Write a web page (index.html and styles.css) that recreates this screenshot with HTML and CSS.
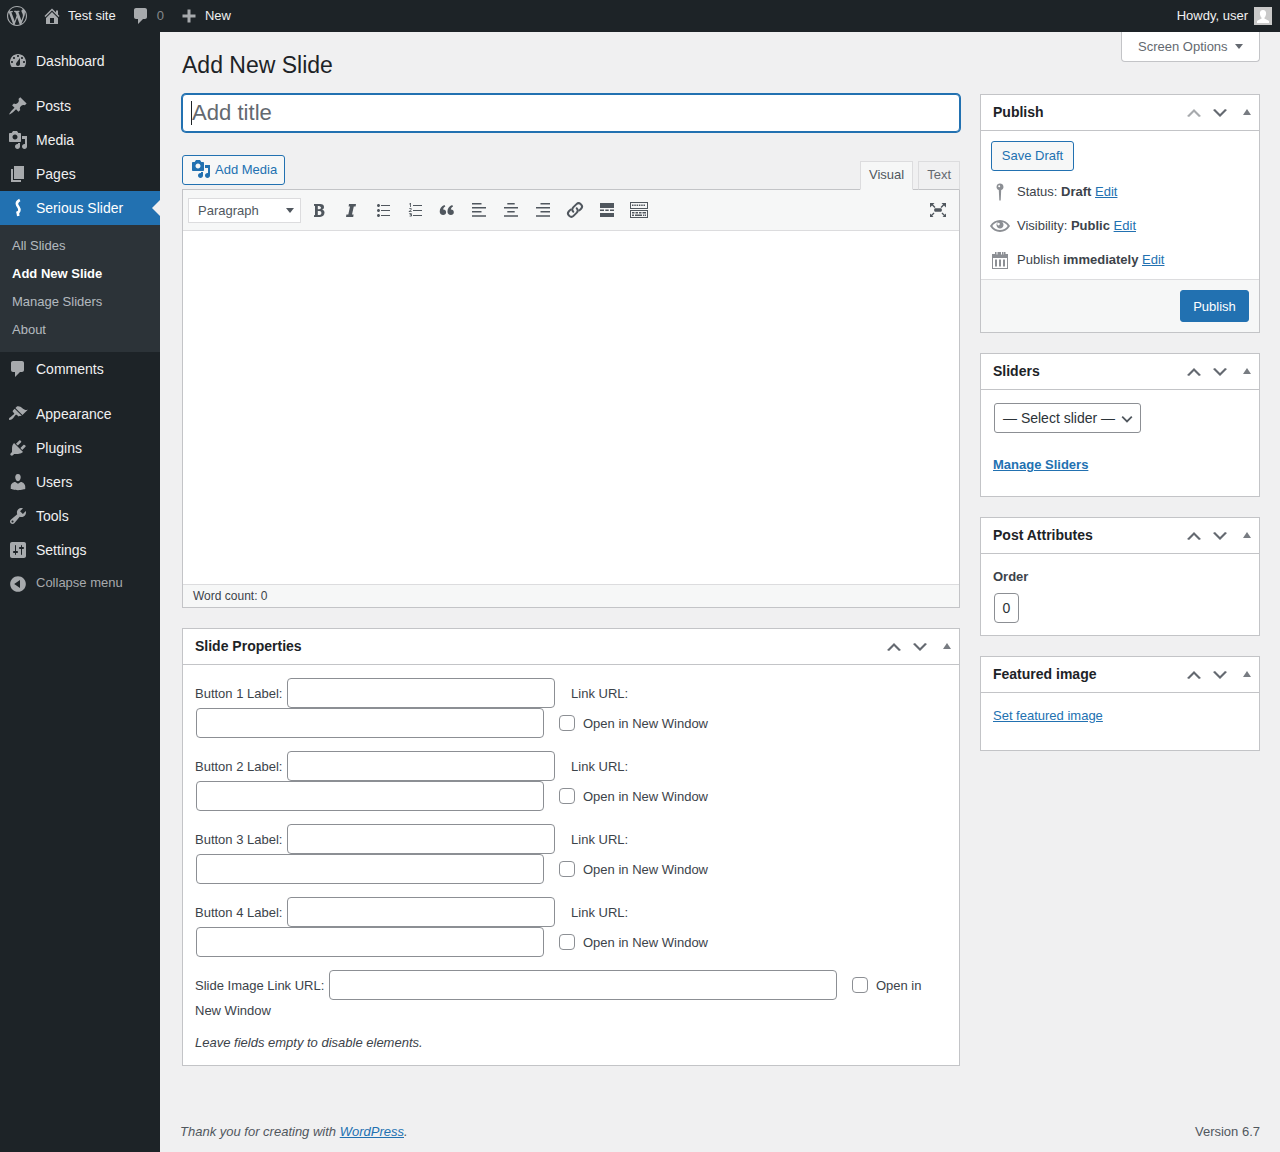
FILE: index.html
```html
<!DOCTYPE html>
<html lang="en">
<head>
<meta charset="utf-8">
<title>Add New Slide</title>
<link rel="stylesheet" href="styles.css">
</head>
<body>
<header class="adminbar">
  <svg class="bar-logo" viewBox="0 0 20 20"><path d="M20 10c0-5.51-4.49-10-10-10C4.48 0 0 4.49 0 10c0 5.52 4.48 10 10 10 5.51 0 10-4.48 10-10zM7.78 15.37L4.37 6.22c.55-.02 1.17-.08 1.17-.08.5-.06.44-1.13-.06-1.11 0 0-1.45.11-2.37.11-.18 0-.37 0-.58-.01C4.12 2.69 6.87 1.11 10 1.11c2.33 0 4.45.87 6.05 2.34-.68-.11-1.65.39-1.65 1.58 0 .74.45 1.36.9 2.1.35.61.55 1.36.55 2.46 0 1.49-1.4 5-1.4 5l-3.03-8.37c.54-.02.82-.17.82-.17.5-.05.44-1.25-.06-1.22 0 0-1.44.12-2.38.12-.87 0-2.33-.12-2.33-.12-.5-.03-.56 1.2-.06 1.22l.92.08 1.26 3.41zM17.41 10c.24-.64.74-1.87.43-4.25.7 1.29 1.05 2.71 1.05 4.25 0 3.29-1.73 6.24-4.4 7.78.97-2.59 1.94-5.2 2.92-7.78zM6.1 18.09C3.12 16.65 1.11 13.53 1.11 10c0-1.3.23-2.48.72-3.59C3.25 10.3 4.67 14.2 6.1 18.09zm4.03-6.63l2.58 6.98c-.86.29-1.76.45-2.71.45-.79 0-1.57-.11-2.29-.33.81-2.38 1.62-4.74 2.42-7.1z"/></svg>
  <svg class="bar-icon bar-home" viewBox="0 0 20 20"><path d="M16 8.5l1.53 1.53-1.06 1.06L10 4.62l-6.47 6.47-1.06-1.06L10 2.5l4 4v-2h2v4zm-6-2.46l6 5.99V18H4v-5.97zM12 17v-5H8v5h4z"/></svg>
  <span class="bar-text bar-site">Test site</span>
  <svg class="bar-icon bar-comment" viewBox="0 0 20 20"><path d="M5 2h9c1.1 0 2 .9 2 2v7c0 1.1-.9 2-2 2h-2l-5 5v-5H5c-1.1 0-2-.9-2-2V4c0-1.1.9-2 2-2z"/></svg>
  <span class="bar-text bar-count">0</span>
  <svg class="bar-icon bar-plus" viewBox="0 0 20 20"><path d="M16.500 8.500v3h-5v5h-3v-5h-5v-3h5v-5h3v5z"/></svg>
  <span class="bar-text">New</span>
  <span class="bar-text bar-howdy">Howdy, user</span>
  <svg class="bar-avatar" viewBox="0 0 18 18"><rect width="18" height="18" fill="#c9c9c9"/><path fill="#fff" d="M9 3c2 0 3.300 1.500 3.100 3.700C12 8.600 11 10.200 10.500 10.600v1.100c1.800.7 4 1.500 4.500 2.500V16H3v-1.800c.5-1 2.700-1.800 4.500-2.500v-1.100C7 10.200 6 8.600 5.900 6.700 5.700 4.500 7 3 9 3z"/></svg>
</header>

<div class="shell">
  <nav class="menu">
    <a class="menu-item first"><svg class="menu-icon" viewBox="0 0 20 20"><path d="M3.760 16h12.480c1.100-1.370 1.760-3.110 1.760-5 0-4.420-3.580-8-8-8s-8 3.580-8 8c0 1.890.66 3.630 1.760 5zM10 4c.55 0 1 .45 1 1s-.45 1-1 1-1-.45-1-1 .45-1 1-1zM6 6c.55 0 1 .45 1 1s-.45 1-1 1-1-.45-1-1 .45-1 1-1zm8 0c.55 0 1 .45 1 1s-.45 1-1 1-1-.45-1-1 .45-1 1-1zm-5.370 5.550L12 7v6c0 1.100-.9 2-2 2s-2-.9-2-2c0-.57.24-1.080.63-1.450zM4 10c.55 0 1 .45 1 1s-.45 1-1 1-1-.45-1-1 .45-1 1-1zm12 0c.55 0 1 .45 1 1s-.45 1-1 1-1-.45-1-1 .45-1 1-1z"/></svg>Dashboard</a>
    <div class="menu-sep"></div>
    <a class="menu-item"><svg class="menu-icon" viewBox="0 0 20 20"><path d="M10.440 3.020l1.820-1.820 6.360 6.350-1.830 1.820c-1.050-.68-2.480-.57-3.410.36l-.75.75c-.92.93-1.040 2.350-.35 3.410l-1.830 1.820-2.410-2.410-2.800 2.790c-.42.42-3.380 2.710-3.800 2.290s1.860-3.390 2.280-3.810l2.790-2.790L4.100 9.360l1.830-1.820c1.050.69 2.480.57 3.400-.36l.75-.75c.93-.92 1.050-2.350.36-3.410z"/></svg>Posts</a>
    <a class="menu-item"><svg class="menu-icon" viewBox="0 0 20 20"><path d="M13 11V4c0-.55-.45-1-1-1h-1.670L9 1H5L3.670 3H2c-.55 0-1 .45-1 1v7c0 .55.45 1 1 1h10c.55 0 1-.45 1-1zM7 4.500c1.380 0 2.500 1.120 2.500 2.500S8.380 9.500 7 9.500 4.500 8.380 4.500 7 5.620 4.500 7 4.500zM14 6h5v10.500c0 1.380-1.120 2.500-2.500 2.500S14 17.880 14 16.500s1.120-2.500 2.500-2.500c.17 0 .34.02.5.05V9h-3V6zm-4 8.050V13h2v3.500c0 1.380-1.120 2.500-2.500 2.500S7 17.880 7 16.500 8.120 14 9.500 14c.17 0 .34.02.5.05z"/></svg>Media</a>
    <a class="menu-item"><svg class="menu-icon" viewBox="0 0 20 20"><path d="M6 15V2h10v13H6zm-1 1h8v2H3V5h2v11z"/></svg>Pages</a>
    <a class="menu-item active"><svg class="menu-icon slider-icon" viewBox="0 0 20 20"><path d="M11.800 2C9 3.500 8.300 5.200 9.300 7.300c1 2 2.700 3.100 2 5.500-.3 1.100-1.300 1.800-2.500 2"/><path d="M9.500 13.500l.8 4.500"/></svg>Serious Slider</a>
    <ul class="submenu">
      <li>All Slides</li>
      <li class="current">Add New Slide</li>
      <li>Manage Sliders</li>
      <li>About</li>
    </ul>
    <a class="menu-item"><svg class="menu-icon" viewBox="0 0 20 20"><path d="M5 2h9c1.100 0 2 .9 2 2v7c0 1.100-.9 2-2 2h-2l-5 5v-5H5c-1.100 0-2-.9-2-2V4c0-1.100.9-2 2-2z"/></svg>Comments</a>
    <div class="menu-sep"></div>
    <a class="menu-item"><svg class="menu-icon" viewBox="0 0 20 20"><path d="M14.480 11.060L7.410 3.990l1.500-1.500c.5-.56 2.300-.47 3.510.32 1.210.8 1.430 1.280 2.910 2.100 1.180.64 2.450 1.260 4.450.85zm-.71.71L6.700 4.700 4.930 6.470c-.39.39-.39 1.020 0 1.410l1.060 1.060c.39.39.39 1.030 0 1.420-.6.6-1.430 1.110-2.210 1.690-.35.26-.7.53-1.010.84C1.430 13.230.4 14.910 1.200 15.700c.79.8 2.470-.23 3.820-1.440.31-.31.58-.66.84-1.010.58-.78 1.090-1.610 1.690-2.210.39-.39 1.020-.39 1.410 0l1.060 1.060c.39.39 1.020.39 1.410 0z"/></svg>Appearance</a>
    <a class="menu-item"><svg class="menu-icon" viewBox="0 0 20 20"><path d="M13.110 4.360L9.870 7.600 8 5.730l3.240-3.240c.35-.34 1.050-.2 1.560.32.52.51.66 1.210.31 1.550zm-8 1.770l.91-1.120 9.010 9.010-1.190.84c-.71.71-2.630 1.160-3.820 1.160H6.140L4.900 17.260c-.59.59-1.540.59-2.120 0-.59-.58-.59-1.530 0-2.120l1.240-1.240v-3.880c0-1.130.4-3.190 1.090-3.890zm7.260 3.970l3.240-3.240c.34-.35 1.040-.21 1.550.31.52.51.66 1.210.31 1.550l-3.240 3.250z"/></svg>Plugins</a>
    <a class="menu-item"><svg class="menu-icon" viewBox="0 0 20 20"><path d="M10 9.250c-2.270 0-2.730-3.440-2.730-3.440C7 4.020 7.820 2 9.970 2c2.160 0 2.980 2.020 2.710 3.810 0 0-.41 3.440-2.680 3.440zm0 2.570L12.720 10c2.390 0 4.520 2.330 4.520 4.530v2.490s-3.650 1.130-7.240 1.130c-3.650 0-7.240-1.130-7.240-1.130v-2.490c0-2.250 1.940-4.480 4.470-4.480z"/></svg>Users</a>
    <a class="menu-item"><svg class="menu-icon" viewBox="0 0 20 20"><path d="M16.680 9.770c-1.340 1.340-3.300 1.670-4.950.99l-5.410 6.520c-.99.99-2.590.99-3.580 0s-.99-2.590 0-3.570l6.520-5.420c-.68-1.650-.35-3.610.99-4.950 1.280-1.280 3.120-1.620 4.720-1.060l-2.890 2.890 2.820 2.820 2.860-2.870c.53 1.580.18 3.390-1.080 4.650zM3.810 16.210c.4.39 1.040.39 1.430 0 .4-.4.4-1.040 0-1.430-.39-.4-1.030-.4-1.430 0-.39.39-.39 1.030 0 1.430z"/></svg>Tools</a>
    <a class="menu-item"><svg class="menu-icon" viewBox="0 0 20 20"><path d="M18 16V4c0-1.100-.9-2-2-2H4c-1.100 0-2 .9-2 2v12c0 1.100.9 2 2 2h12c1.100 0 2-.9 2-2zM8 11h1c.55 0 1 .45 1 1s-.45 1-1 1H8v1.500c0 .28-.22.5-.5.5s-.5-.22-.5-.5V13H6c-.55 0-1-.45-1-1s.45-1 1-1h1V5.500c0-.28.22-.5.5-.5s.5.22.5.5V11zm5-2h-1c-.55 0-1-.45-1-1s.45-1 1-1h1V5.500c0-.28.22-.5.5-.5s.5.22.5.5V7h1c.55 0 1 .45 1 1s-.45 1-1 1h-1v5.500c0 .28-.22.5-.5.5s-.5-.22-.5-.5V9z"/></svg>Settings</a>
    <a class="menu-item collapse"><svg class="menu-icon" viewBox="0 0 20 20"><path d="M10 2.160c4.330 0 7.840 3.510 7.840 7.840s-3.510 7.840-7.840 7.840S2.160 14.330 2.160 10 5.710 2.160 10 2.160zm2 11.720V6.120L6.180 9.970z"/></svg>Collapse menu</a>
  </nav>

  <main class="content">
    <div class="page-head">
      <h1 class="page-title">Add New Slide</h1>
      <button class="screen-options">Screen Options<span class="caret-down"></span></button>
    </div>
    <div class="columns">
      <div class="col-main">
        <div class="title-field"><span class="title-caret"></span><span class="title-placeholder">Add title</span></div>

        <div class="editor-top">
          <button class="btn btn-outline add-media"><svg class="add-media-icon" viewBox="0 0 20 20"><path d="M13 11V4c0-.55-.45-1-1-1h-1.670L9 1H5L3.670 3H2c-.55 0-1 .45-1 1v7c0 .55.45 1 1 1h10c.55 0 1-.45 1-1zM7 4.500c1.380 0 2.500 1.120 2.500 2.500S8.380 9.500 7 9.500 4.500 8.380 4.500 7 5.620 4.500 7 4.500zM14 6h5v10.500c0 1.380-1.120 2.500-2.500 2.500S14 17.880 14 16.500s1.120-2.500 2.500-2.500c.17 0 .34.02.5.05V9h-3V6zm-4 8.050V13h2v3.500c0 1.380-1.120 2.500-2.500 2.500S7 17.880 7 16.500 8.120 14 9.500 14c.17 0 .34.02.5.05z"/></svg>Add Media</button>
          <div class="tabs">
            <span class="tab tab-on">Visual</span>
            <span class="tab">Text</span>
          </div>
        </div>

        <div class="editor">
          <div class="toolbar">
            <div class="format-select">Paragraph<span class="caret-down dark"></span></div>
            <svg class="tool" viewBox="0 0 20 20"><path fill-rule="evenodd" d="M5 4h6.200c2.500 0 3.800 1.100 3.800 3 0 1.300-.7 2.200-1.800 2.600v.1c1.400.3 2.300 1.300 2.300 2.900 0 2.700-1.800 4.400-4.500 4.400H5v-1.700l1-.3V6l-1-.3zm3.800 2v3.300h1.400c1.100 0 1.800-.6 1.800-1.700S10.300 6 9.200 6zm0 5v4h1.700c1.200 0 1.900-.8 1.900-2s-.7-2-1.900-2z"/></svg>
            <svg class="tool" viewBox="0 0 20 20"><path d="M8 4h7l-.4 2.400h-1.800L11 14.600h1.600L12.200 17H5l.4-2.400h1.900L9 6.400H7.600z"/></svg>
            <svg class="tool" viewBox="0 0 20 20"><path d="M5.500 7C4.670 7 4 6.330 4 5.500 4 4.680 4.670 4 5.500 4 6.320 4 7 4.680 7 5.500 7 6.330 6.320 7 5.500 7zM8 5h9v1H8V5zm-2.500 7c-.83 0-1.500-.67-1.500-1.500C4 9.680 4.670 9 5.500 9c.82 0 1.500.68 1.500 1.500 0 .83-.68 1.500-1.500 1.500zM8 10h9v1H8v-1zm-2.500 7c-.83 0-1.500-.67-1.500-1.500 0-.82.67-1.500 1.500-1.500.82 0 1.500.68 1.500 1.500 0 .83-.68 1.500-1.500 1.500zM8 15h9v1H8v-1z"/></svg>
            <svg class="tool" viewBox="0 0 20 20"><path d="M6 7V3h-.69L4.020 4.030l.4.51.46-.37c.06-.05.16-.14.3-.28l-.02.42V7H6zm2-2h9v1H8V5zm-1.230 6.950v-.7H5.050v-.04l.51-.48c.33-.31.57-.54.7-.71.14-.17.24-.33.3-.49.07-.16.1-.33.1-.51 0-.21-.05-.4-.16-.56-.1-.16-.25-.28-.44-.37s-.41-.14-.65-.14c-.19 0-.36.02-.51.06-.15.03-.29.09-.42.15-.12.07-.29.19-.48.35l.45.54c.16-.13.31-.23.45-.3.15-.07.3-.1.45-.1.14 0 .26.03.35.11s.13.2.13.36c0 .1-.02.2-.06.3s-.1.21-.19.33c-.09.12-.27.32-.54.6L3.690 11.400v.55h3.080zM8 10h9v1H8v-1zm-1.290 3.950c0-.3-.12-.54-.37-.71-.24-.17-.58-.26-1-.26-.52 0-.96.13-1.330.4l.4.6c.17-.11.32-.19.45-.23.14-.05.27-.07.4-.07.31 0 .46.11.46.33 0 .13-.05.23-.16.28-.1.06-.26.09-.48.09H4.600v.67h.47c.24 0 .42.03.53.08.12.06.18.15.18.29 0 .15-.05.26-.14.33-.1.07-.24.11-.44.11-.13 0-.26-.02-.38-.05-.12-.03-.27-.08-.44-.17v.72c.18.07.36.12.53.15.17.03.36.04.58.04.49 0 .88-.1 1.160-.3.29-.2.43-.48.43-.84 0-.24-.07-.44-.21-.58-.14-.15-.35-.25-.63-.31v-.01c.28-.07.5-.19.66-.37.16-.18.24-.39.24-.62zM8 15h9v1H8v-1z"/></svg>
            <svg class="tool" viewBox="0 0 20 20"><path transform="translate(.9 1.100) scale(.91)" d="M2 11.500C2 8 4 5.500 7.200 4.300L8.200 6C6.700 6.800 5.800 8 5.700 9.300c1.800-.2 3.300 1 3.300 2.900 0 1.800-1.300 3.100-3.200 3.100C3.500 15.300 2 13.900 2 11.500zM10.500 11.500c0-3.500 2-6 5.200-7.200L16.700 6c-1.500.8-2.400 2-2.500 3.300 1.800-.2 3.300 1 3.300 2.900 0 1.800-1.300 3.100-3.200 3.100-2.300 0-3.800-1.400-3.800-3.800z"/></svg>
            <svg class="tool" viewBox="0 0 20 20"><path d="M3 3h9.500v1.600H3zM3 7h14v1.600H3zM3 11h9.500v1.600H3zM3 15.200h14v1.600H3z"/></svg>
            <svg class="tool" viewBox="0 0 20 20"><path d="M6.300 3h7.400v1.600H6.300zM3 7h14v1.600H3zM6.300 11h7.400v1.600H6.300zM3 15.200h14v1.600H3z"/></svg>
            <svg class="tool" viewBox="0 0 20 20"><path d="M7.500 3H17v1.600H7.500zM3 7h14v1.600H3zM7.500 11H17v1.600H7.500zM3 15.200h14v1.600H3z"/></svg>
            <svg class="tool" viewBox="0 0 20 20"><g fill="none" stroke="#50575e" stroke-width="2" stroke-linecap="round"><path d="M8.300 11.700l-.1-.1a3 3 0 0 1 0-4.200l3.300-3.300a3 3 0 0 1 4.200 0l.4.400a3 3 0 0 1 0 4.200l-1.700 1.700"/><path d="M11.700 8.300l.1.1a3 3 0 0 1 0 4.200l-3.300 3.300a3 3 0 0 1-4.200 0l-.4-.4a3 3 0 0 1 0-4.200l1.700-1.700"/></g></svg>
            <svg class="tool" viewBox="0 0 20 20"><path d="M3 3h14v5H3zM3 9.500h4v1.500H3zM8.300 9.500h3.400v1.500H8.300zM13 9.500h4v1.500h-4zM3 13h14v4H3z"/></svg>
            <svg class="tool tool-kb" viewBox="0 0 20 20"><path fill-rule="evenodd" d="M1 2h18v7H1zm1 1v5h16V3zM3 4.500h1.500V6H3zm2.300 0h1.500V6H5.300zm2.300 0h1.500V6H7.600zm2.300 0h1.500V6H9.900zm2.300 0h1.500V6h-1.500zm2.300 0H16V6h-1.500zM1 10h18v8H1zm1 1v6h16v-6zm1 1h2.500v1.500H3zm3.500 0H9v1.500H6.500zm3.500 0h2.500v1.500H10zm3.500 0H17v1.500h-3.500zM3 14.500h2v1.500H3zm3 0h7v1.500H6zm8 0h1.200v1.500H14zm1.800 0H17v1.500h-1.200z"/></svg>
            <svg class="tool tool-full" viewBox="0 0 20 20"><path d="M2 3h4.500L5 4.500 7.500 7 6.500 8 4 5.500 2 7.500zM18 3h-4.500L15 4.500 12.500 7l1 1L16 5.500l2 2zM2 17h3.500L4.200 15.700 6.500 13.400l-.9-.9-2.300 2.300L2 13.500zM18 17h-3.500l1.300-1.300-2.300-2.300.9-.9 2.300 2.300 1.300-1.300zM7 8.200h6l.8.8v2l-.8.8H7l-.8-.8V9z"/></svg>
          </div>
          <div class="editor-body"></div>
          <div class="editor-status">Word count: 0</div>
        </div>

        <section class="box box-slide">
          <div class="box-head">
            <h2 class="box-title">Slide Properties</h2>
            <div class="box-controls">
              <svg class="chev" viewBox="0 0 20 20"><path d="M15 14l-5-5-5 5-2-1 7-7 7 7z"/></svg>
              <svg class="chev" viewBox="0 0 20 20"><path d="M5 6l5 5 5-5 2 1-7 7-7-7z"/></svg>
              <span class="toggle"></span>
            </div>
          </div>
          <div class="slide-body">
            <p class="slide-row">Button 1 Label: <input class="field f-label" type="text"><span class="link-label">Link URL:</span> <input class="field f-url" type="text"><label class="check-label"><input class="check" type="checkbox">Open in New Window</label></p>
            <p class="slide-row">Button 2 Label: <input class="field f-label" type="text"><span class="link-label">Link URL:</span> <input class="field f-url" type="text"><label class="check-label"><input class="check" type="checkbox">Open in New Window</label></p>
            <p class="slide-row">Button 3 Label: <input class="field f-label" type="text"><span class="link-label">Link URL:</span> <input class="field f-url" type="text"><label class="check-label"><input class="check" type="checkbox">Open in New Window</label></p>
            <p class="slide-row">Button 4 Label: <input class="field f-label" type="text"><span class="link-label">Link URL:</span> <input class="field f-url" type="text"><label class="check-label"><input class="check" type="checkbox">Open in New Window</label></p>
            <p class="slide-row slide-row-last">Slide Image Link URL: <input class="field f-image" type="text"><label class="check-label"><input class="check" type="checkbox">Open in</label> New Window</p>
            <p class="slide-note">Leave fields empty to disable elements.</p>
          </div>
        </section>
      </div>

      <aside class="col-side">
        <section class="box">
          <div class="box-head">
            <h2 class="box-title">Publish</h2>
            <div class="box-controls">
              <svg class="chev off" viewBox="0 0 20 20"><path d="M15 14l-5-5-5 5-2-1 7-7 7 7z"/></svg>
              <svg class="chev" viewBox="0 0 20 20"><path d="M5 6l5 5 5-5 2 1-7 7-7-7z"/></svg>
              <span class="toggle"></span>
            </div>
          </div>
          <div class="publish-main">
            <button class="btn btn-outline save-draft">Save Draft</button>
            <div class="pub-row"><svg class="pub-icon" viewBox="0 0 20 20"><path d="M10 1.500a3.400 3.400 0 0 1 1.200 6.600L10.700 18.500H9.300L8.800 8.100A3.400 3.400 0 0 1 10 1.500zM9.200 3.200a1 1 0 1 0 0 2 1 1 0 0 0 0-2z" fill-rule="evenodd"/></svg><span>Status: <b>Draft</b> <a class="link">Edit</a></span></div>
            <div class="pub-row"><svg class="pub-icon" viewBox="0 0 20 20"><path fill-rule="evenodd" d="M19.700 9.400C17.700 6 14 3.900 10 3.900S2.300 6 .3 9.400L0 10l.3.6c2 3.400 5.700 5.500 9.700 5.500s7.700-2.100 9.700-5.500l.3-.6-.3-.6zM10 14.100c-3.100 0-6-1.600-7.700-4.100C3.600 8 5.700 6.600 8 6.100c-.9.6-1.500 1.700-1.500 2.900 0 1.900 1.600 3.500 3.500 3.500s3.500-1.600 3.500-3.500c0-1.200-.6-2.300-1.500-2.900 2.300.5 4.400 1.900 5.700 3.900-1.700 2.500-4.600 4.100-7.700 4.100zM8.500 6.800a1.300 1.300 0 1 0 0 2.600 1.300 1.300 0 0 0 0-2.600z"/></svg><span>Visibility: <b>Public</b> <a class="link">Edit</a></span></div>
            <div class="pub-row"><svg class="pub-icon" viewBox="0 0 20 20"><path fill-rule="evenodd" d="M5 2h1.500v2.500h1V2H9h2v2.500h1V2h1.500v2.500h.5V2h1.500v2H18v15H2V4h3zM3 8v10h14V8zm2 1.500h2V16.500H5zm4 0h2V16.500H9zm4 0h2V16.500h-2z"/></svg><span>Publish <b>immediately</b> <a class="link">Edit</a></span></div>
          </div>
          <div class="publish-foot"><button class="btn btn-primary">Publish</button></div>
        </section>

        <section class="box">
          <div class="box-head">
            <h2 class="box-title">Sliders</h2>
            <div class="box-controls">
              <svg class="chev" viewBox="0 0 20 20"><path d="M15 14l-5-5-5 5-2-1 7-7 7 7z"/></svg>
              <svg class="chev" viewBox="0 0 20 20"><path d="M5 6l5 5 5-5 2 1-7 7-7-7z"/></svg>
              <span class="toggle"></span>
            </div>
          </div>
          <div class="sliders-body">
            <div class="select-slider">— Select slider —<svg class="select-chev" viewBox="0 0 20 20"><path d="M4 7l6 6 6-6"/></svg></div>
            <a class="link link-strong">Manage Sliders</a>
          </div>
        </section>

        <section class="box">
          <div class="box-head">
            <h2 class="box-title">Post Attributes</h2>
            <div class="box-controls">
              <svg class="chev" viewBox="0 0 20 20"><path d="M15 14l-5-5-5 5-2-1 7-7 7 7z"/></svg>
              <svg class="chev" viewBox="0 0 20 20"><path d="M5 6l5 5 5-5 2 1-7 7-7-7z"/></svg>
              <span class="toggle"></span>
            </div>
          </div>
          <div class="attr-body">
            <p class="attr-label">Order</p>
            <input class="field f-order" type="text" value="0">
          </div>
        </section>

        <section class="box">
          <div class="box-head">
            <h2 class="box-title">Featured image</h2>
            <div class="box-controls">
              <svg class="chev" viewBox="0 0 20 20"><path d="M15 14l-5-5-5 5-2-1 7-7 7 7z"/></svg>
              <svg class="chev" viewBox="0 0 20 20"><path d="M5 6l5 5 5-5 2 1-7 7-7-7z"/></svg>
              <span class="toggle"></span>
            </div>
          </div>
          <div class="featured-body"><a class="link">Set featured image</a></div>
        </section>
      </aside>
    </div>
    <footer class="page-foot">
      <span class="thanks">Thank you for creating with <a class="link">WordPress</a>.</span>
      <span class="version">Version 6.7</span>
    </footer>
  </main>
</div>
</body>
</html>
```

FILE: styles.css
```css
* { box-sizing: border-box; }
html, body { margin: 0; height: 100%; }
body {
  background: #f0f0f1;
  color: #3c434a;
  font: 13px/1.4 "Liberation Sans", Arial, sans-serif;
  height: 1152px;
  overflow: hidden;
  display: flex;
  flex-direction: column;
}
p { margin: 0; }
button, input { font-family: inherit; }
.link { color: #2271b1; text-decoration: underline; }

/* admin bar */
.adminbar {
  height: 32px;
  flex: none;
  background: #1d2327;
  display: flex;
  align-items: center;
  color: #f0f0f1;
}
.bar-logo { width: 20px; height: 20px; margin-left: 7px; fill: #a7aaad; }
.bar-icon { width: 20px; height: 20px; fill: #a7aaad; }
.bar-home { margin-left: 15px; }
.bar-text { line-height: 32px; }
.bar-site { margin-left: 6px; }
.bar-comment { margin-left: 15px; }
.bar-count { margin-left: 6px; color: #a7aaad; opacity: .75; }
.bar-plus { margin-left: 15px; margin-right: 6px; }
.bar-howdy { margin-left: auto; }
.bar-avatar { width: 18px; height: 18px; margin: 0 8px 1px 6px; }

/* shell */
.shell { flex: 1; display: flex; min-height: 0; }

/* left menu */
.menu {
  width: 160px;
  flex: none;
  background: #1d2327;
  padding-top: 12px;
}
.menu-item {
  position: relative;
  display: flex;
  align-items: center;
  height: 34px;
  padding: 1px 0 0 8px;
  color: #f0f0f1;
  font-size: 14px;
}
.menu-icon { width: 20px; height: 20px; margin: -1px 8px 0 0; fill: #a7aaad; flex: none; }
.menu-sep { height: 11px; }
.menu-item.active { background: #2271b1; color: #fff; }
.menu-item.active .menu-icon { fill: #fff; }
.menu-item.active .slider-icon { fill: none; stroke: #fff; stroke-width: 2.6; }
.menu-item.active::after {
  content: "";
  position: absolute;
  right: 0;
  top: 9px;
  border: 8px solid transparent;
  border-right-color: #f0f0f1;
  border-left-width: 0;
}
.menu-item.collapse { color: #a7aaad; font-size: 13px; height: 33px; padding-top: 0; }
.menu-item.collapse .menu-icon { margin-top: 0; }
.submenu {
  list-style: none;
  margin: 0;
  padding: 6px 0 9px;
  background: #2c3338;
}
.submenu li {
  height: 28px;
  line-height: 30px;
  padding-left: 12px;
  color: rgba(240, 246, 252, .7);
}
.submenu li.current { color: #fff; font-weight: 700; }

/* content */
.content {
  flex: 1;
  min-width: 0;
  padding: 0 20px 0 22px;
  display: flex;
  flex-direction: column;
}
.page-head {
  display: flex;
  justify-content: space-between;
  align-items: flex-start;
  height: 62px;
}
.page-title {
  margin: 0;
  padding-top: 18px;
  font-size: 23px;
  font-weight: 400;
  line-height: 30px;
  color: #1d2327;
}
.screen-options {
  height: 30px;
  width: 139px;
  padding: 0 0 0 16px;
  background: #fff;
  border: 1px solid #c3c4c7;
  border-top: 0;
  border-radius: 0 0 4px 4px;
  color: #646970;
  font-size: 13px;
  display: flex;
  align-items: center;
  text-align: left;
}
.caret-down {
  width: 0;
  height: 0;
  margin-left: 7px;
  border: 4px solid transparent;
  border-top: 5px solid #646970;
  border-bottom: 0;
}
.columns { display: flex; gap: 20px; align-items: flex-start; }
.col-main { width: 778px; flex: none; }
.col-side { width: 280px; flex: none; display: flex; flex-direction: column; gap: 20px; }

/* title */
.title-field {
  height: 38px;
  background: #fff;
  border: 1px solid #2271b1;
  box-shadow: 0 0 0 1px #2271b1;
  border-radius: 4px;
  display: flex;
  align-items: center;
  padding-left: 8px;
  font-size: 22.1px;
  color: #646970;
}
.title-caret { width: 1px; height: 24px; background: #1d2327; }

/* buttons */
.btn {
  border-radius: 3px;
  font-size: 13px;
  height: 30px;
  padding: 0 10px;
  cursor: pointer;
}
.btn-outline { background: #f6f7f7; border: 1px solid #2271b1; color: #2271b1; }
.btn-primary { background: #2271b1; border: 1px solid #2271b1; color: #fff; height: 32px; width: 69px; padding: 0; }

/* editor */
.editor-top {
  display: flex;
  justify-content: space-between;
  align-items: flex-end;
  height: 34px;
  margin-top: 23px;
}
.add-media {
  align-self: flex-start;
  display: flex;
  align-items: center;
  width: 103px;
  padding: 0 0 2px 8px;
}
.add-media-icon { width: 20px; height: 20px; margin-right: 4px; fill: #2271b1; }
.tabs { display: flex; gap: 5px; margin-bottom: -1px; position: relative; z-index: 1; }
.tab {
  height: 29px;
  line-height: 26px;
  padding: 0 8px;
  border: 1px solid #dcdcde;
  background: #f0f0f1;
  color: #646970;
}
.tab-on {
  background: #f6f7f7;
  border-color: #dcdcde;
  border-bottom-color: #f6f7f7;
  color: #50575e;
}
.tab:not(.tab-on) { border-bottom-color: #c3c4c7; }
.editor {
  height: 419px;
  border: 1px solid #c3c4c7;
  background: #fff;
  display: flex;
  flex-direction: column;
}
.toolbar {
  height: 41px;
  flex: none;
  background: #f6f7f7;
  border-bottom: 1px solid #dcdcde;
  display: flex;
  align-items: center;
  padding-left: 5px;
  padding-right: 11px;
}
.format-select {
  width: 113px;
  height: 25px;
  background: #fff;
  border: 1px solid #dcdcde;
  color: #50575e;
  padding-left: 9px;
  line-height: 23px;
  display: flex;
  align-items: center;
  margin-right: 2px;
  flex: none;
}
.format-select .dark { margin-left: auto; margin-right: 6px; border-top-color: #50575e; border-width: 5px 4px 0; }
.tool { width: 20px; height: 20px; flex: none; fill: #50575e; margin: 0 6px; }
.tool-kb { margin-right: 0; }
.tool-full { margin-left: auto; margin-right: 0; }
.editor-body { flex: 1; }
.editor-status {
  height: 23px;
  flex: none;
  background: #f6f7f7;
  border-top: 1px solid #dcdcde;
  padding-left: 10px;
  font-size: 12px;
  line-height: 22px;
  color: #3c434a;
}

/* boxes */
.box { background: #fff; border: 1px solid #c3c4c7; }
.box-slide { margin-top: 20px; }
.box-head {
  height: 36px;
  border-bottom: 1px solid #c3c4c7;
  display: flex;
  align-items: center;
  justify-content: space-between;
  padding-left: 12px;
}
.box-title { margin: 0; font-size: 14px; line-height: 1.4; font-weight: 700; color: #1d2327; }
.box-controls { display: flex; align-items: center; }
.chev { width: 20px; height: 20px; margin-left: 6px; fill: #646970; }
.chev.off { fill: #a7aaad; }
.toggle {
  width: 0;
  height: 0;
  margin: -1px 8px 0 13px;
  border: 4px solid transparent;
  border-bottom: 6px solid #787c82;
  border-top: 0;
}

/* slide properties */
.slide-body { padding: 13px 12px 13px; }
.slide-row { margin-bottom: 13px; }
.slide-row-last { margin-bottom: 12px; line-height: 22px; }
.field {
  height: 30px;
  background: #fff;
  border: 1px solid #8c8f94;
  border-radius: 4px;
  color: #2c3338;
  font-size: 14px;
  padding: 0 8px;
  margin: 0 1px;
}
.f-label { width: 268px; }
.f-url { width: 348px; }
.f-image { width: 508px; }
.link-label { margin-left: 15px; }
.check-label { margin-left: 14px; }
.check {
  appearance: none;
  width: 16px;
  height: 16px;
  margin: -4px 8px 0 0;
  background: #fff;
  border: 1px solid #8c8f94;
  border-radius: 4px;
  vertical-align: middle;
}
.slide-note { font-style: italic; }

/* publish */
.publish-main { padding: 10px 10px 0; height: 148px; }
.save-draft { width: 83px; padding: 0 0 2px; display: block; margin-bottom: 4px; }
.pub-row { display: flex; align-items: center; height: 34px; }
.pub-icon { width: 20px; height: 20px; fill: #8c8f94; margin: 0 7px 0 -1px; flex: none; }
.publish-foot {
  border-top: 1px solid #dcdcde;
  background: #f6f7f7;
  display: flex;
  justify-content: flex-end;
  height: 53px;
  padding: 10px 10px 0;
}

/* sliders */
.sliders-body { padding: 13px 13px 0; height: 106px; }
.select-slider {
  width: 147px;
  height: 30px;
  border: 1px solid #8c8f94;
  border-radius: 3px;
  background: #fff;
  color: #2c3338;
  font-size: 14px;
  display: flex;
  align-items: center;
  padding: 1px 0 0 8px;
}
.select-chev { width: 16px; height: 16px; margin: 0 0 0 4px; fill: none; stroke: #50575e; stroke-width: 2.2; }
.link-strong { display: block; margin: 23px 0 0 -1px; font-weight: 700; }

/* attributes */
.attr-body { padding: 14px 12px 12px; height: 81px; }
.attr-label { font-weight: 600; margin-bottom: 7px; color: #3c434a; }
.f-order { width: 25px; padding: 0; text-align: center; }

/* featured */
.featured-body { padding: 14px 12px 0; height: 57px; }

/* footer */
.page-foot {
  margin-top: auto;
  margin-left: -2px;
  height: 29px;
  display: flex;
  justify-content: space-between;
  color: #50575e;
}
.thanks { font-style: italic; }
```
